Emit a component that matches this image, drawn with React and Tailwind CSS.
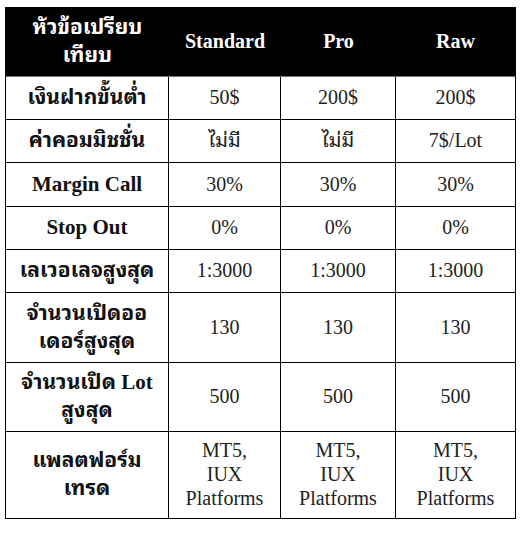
const rows = [
  { label: "เงินฝากขั้นต่ำ", h: "h-[43px]", values: ["50$", "200$", "200$"] },
  { label: "ค่าคอมมิชชั่น", h: "h-[43px]", values: ["ไม่มี", "ไม่มี", "7$/Lot"] },
  { label: "Margin Call", h: "h-[44px]", values: ["30%", "30%", "30%"] },
  { label: "Stop Out", h: "h-[43px]", values: ["0%", "0%", "0%"] },
  { label: "เลเวอเลจสูงสุด", h: "h-[43px]", values: ["1:3000", "1:3000", "1:3000"] },
  { label: ["จำนวนเปิดออ", "เดอร์สูงสุด"], h: "h-[70px]", values: ["130", "130", "130"] },
  { label: ["จำนวนเปิด Lot", "สูงสุด"], h: "h-[69px]", values: ["500", "500", "500"] },
  {
    label: ["แพลตฟอร์ม", "เทรด"],
    h: "h-[86px]",
    values: [["MT5,", "IUX", "Platforms"], ["MT5,", "IUX", "Platforms"], ["MT5,", "IUX", "Platforms"]],
    last: true,
  },
];

const lines = (t) => (Array.isArray(t) ? t.map((l, i) => <span key={i} className="block">{l}</span>) : t);

const Cell = ({ children, className }) => (
  <div className={"flex flex-col items-center justify-center text-center " + className}>{children}</div>
);

const App = () => {
  return (
    <div className="min-h-[537px] w-[521px] bg-white pt-[7px] pl-[5px] font-['Liberation_Serif','Tahoma','Noto_Sans_Thai_Looped','Loma','Garuda','Norasi','Noto_Serif_Thai','Noto_Sans_Thai',serif]">
      <div className="grid w-[511px] grid-cols-[163px_112px_115px_119px] border border-black">
        <Cell className="h-[69px] border-b border-b-[#707070] bg-black pb-[2px] text-[21px] font-bold leading-[28px] text-white">
          <span className="block">หัวข้อเปรียบ</span>
          <span className="block">เทียบ</span>
        </Cell>
        <Cell className="h-[69px] border-b border-b-[#707070] bg-black pb-[2px] text-[20px] font-bold text-white">Standard</Cell>
        <Cell className="h-[69px] border-b border-b-[#707070] bg-black pb-[2px] text-[20px] font-bold text-white">Pro</Cell>
        <Cell className="h-[69px] border-b border-b-[#707070] bg-black pb-[2px] text-[20px] font-bold text-white">Raw</Cell>

        {rows.map((r, i) => (
          <div key={i} className="contents">
            <Cell className={`${r.h} border-r border-black ${r.last ? "" : "border-b"} pb-[2px] text-[21px] font-bold leading-[28px] text-[#111]`}>
              {lines(r.label)}
            </Cell>
            {r.values.map((v, j) => (
              <Cell
                key={j}
                className={`${r.h} border-black ${j < 2 ? "border-r" : ""} ${r.last ? "" : "border-b"} pb-[2px] text-[20px] leading-[24px] text-[#222]`}
              >
                {lines(v)}
              </Cell>
            ))}
          </div>
        ))}
      </div>
    </div>
  );
};

export default App;
